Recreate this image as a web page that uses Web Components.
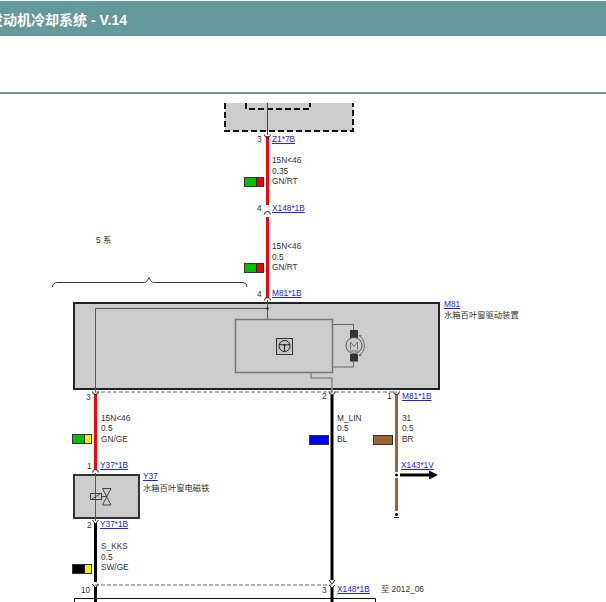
<!DOCTYPE html>
<html lang="zh">
<head>
<meta charset="utf-8">
<title>发动机冷却系统</title>
<style>
html, body { margin: 0; height: 100%; overflow: hidden; background: #fff; }
body { font-family: "Liberation Sans", "Noto Sans CJK SC", sans-serif; }
</style>
</head>
<body>
<page-header title-text="发动机冷却系统 - V.14"></page-header>
<wiring-canvas>
  <wiring-drawing></wiring-drawing>

  <wire-text x="257" y="139">3</wire-text>
  <wire-link x="272" y="139">Z1*7B</wire-link>
  <wire-notes x="272" y="160" a="15N&lt;46" b="0.35" c="GN/RT"></wire-notes>
  <wire-swatch x="244" y="177" main="#00c000" stripe="#f00000"></wire-swatch>
  <wire-text x="257" y="208">4</wire-text>
  <wire-link x="272" y="208">X148*1B</wire-link>
  <wire-text x="96" y="240">5 系</wire-text>
  <wire-notes x="272" y="246" a="15N&lt;46" b="0.5" c="GN/RT"></wire-notes>
  <wire-swatch x="244" y="263" main="#00c000" stripe="#f00000"></wire-swatch>
  <wire-text x="257" y="294">4</wire-text>
  <wire-link x="272" y="293">M81*1B</wire-link>
  <wire-link x="444" y="304">M81</wire-link>
  <wire-text x="444" y="315">水箱百叶窗驱动装置</wire-text>

  <wire-text x="86" y="397">3</wire-text>
  <wire-text x="322" y="396">2</wire-text>
  <wire-text x="387" y="396">1</wire-text>
  <wire-link x="402" y="396">M81*1B</wire-link>
  <wire-notes x="101" y="417.5" a="15N&lt;46" b="0.5" c="GN/GE"></wire-notes>
  <wire-swatch x="72" y="434" main="#00c000" stripe="#f0f000"></wire-swatch>
  <wire-notes x="337" y="417.5" a="M_LIN" b="0.5" c="BL"></wire-notes>
  <wire-swatch x="309" y="435" main="#0000f0"></wire-swatch>
  <wire-notes x="402" y="417.5" a="31" b="0.5" c="BR"></wire-notes>
  <wire-swatch x="373" y="435" main="#996633"></wire-swatch>
  <wire-link x="401" y="465">X143*1V</wire-link>
  <wire-text x="87" y="466">1</wire-text>
  <wire-link x="100" y="465">Y37*1B</wire-link>
  <wire-link x="143" y="476">Y37</wire-link>
  <wire-text x="143" y="488">水箱百叶窗电磁铁</wire-text>

  <wire-text x="87" y="525">2</wire-text>
  <wire-link x="100" y="524">Y37*1B</wire-link>
  <wire-notes x="101" y="546" a="S_KKS" b="0.5" c="SW/GE"></wire-notes>
  <wire-swatch x="72" y="564" main="#000" stripe="#f0f000"></wire-swatch>
  <wire-text x="81" y="590">10</wire-text>
  <wire-text x="322" y="590">3</wire-text>
  <wire-link x="337" y="589">X148*1B</wire-link>
  <wire-text x="381" y="589">至 2012_06</wire-text>
</wiring-canvas>

<script>
// page y of the top of the canvas, coordinates below are read off the page
const CANVAS_TOP = 94

function place(el) {
    el.style.left = el.getAttribute('x') + 'px'
    el.style.top = (parseFloat(el.getAttribute('y')) - CANVAS_TOP - 5) + 'px'
}

class PageHeader extends HTMLElement {
    constructor() {
        super()
        this.attachShadow({mode: 'open'})
    }
    connectedCallback() {
        this.shadowRoot.innerHTML = `
        <style>
        :host { display: block; height: 94px; box-sizing: border-box; border-bottom: 2px solid #669999; padding-top: 1px; }
        .bar { height: 35px; background: #669999; color: #fff; display: flex; align-items: center; overflow: hidden; }
        h1 { margin: 0 0 0 -11px; font: bold 14px "Liberation Sans", "Noto Sans CJK SC", sans-serif; white-space: nowrap; }
        </style>
        <div class="bar"><h1>${this.getAttribute('title-text')}</h1></div>
        `
    }
}

class WiringCanvas extends HTMLElement {
    constructor() {
        super()
        this.attachShadow({mode: 'open'})
        this.shadowRoot.innerHTML = `
        <style>
        :host { display: block; position: relative; height: 508px; overflow: hidden; }
        </style>
        <slot></slot>
        `
    }
}

class WiringDrawing extends HTMLElement {
    constructor() {
        super()
        this.attachShadow({mode: 'open'})
        this.shadowRoot.innerHTML = `
        <style>
        :host { display: block; position: absolute; left: 0; top: 0; }
        svg { display: block; }
        </style>
        <svg width="606" height="508" viewBox="0 94 606 508" fill="none">
          <!-- upper control unit, cut off -->
          <rect x="225" y="103" width="128" height="28" fill="#ccc"/>
          <path d="M225 103V131H353V103" stroke="#111" stroke-width="2" stroke-dasharray="6 3"/>
          <path d="M246 103V109H310V103" stroke="#111" stroke-width="2" stroke-dasharray="6 3"/>
          <path d="M267.5 103V135" stroke="#444"/>

          <!-- red wires top -->
          <path d="M267.5 136V205M267.5 217V298" stroke="#f00" stroke-width="3"/>
          <path d="M264.5 134.5a3 3 0 0 0 6 0M264.5 214.5a3 3 0 0 1 6 0M264.5 300.5a3 3 0 0 1 6 0" stroke="#222"/>

          <!-- brace -->
          <path d="M52.5 287c0-3 2-4.500 5-4.500H144c2 0 3-1 5-5 2 4 3 5 5 5h88c3 0 5 1.500 5 4.500" stroke="#333"/>

          <!-- M81 -->
          <rect x="74" y="303" width="365" height="86" fill="#ccc" stroke="#222" stroke-width="2"/>
          <path d="M95.500 392V308.500H267.500M267.500 300V319" stroke="#555"/>
          <circle cx="267.500" cy="308.500" r="1.300" fill="#333"/>
          <rect x="235.500" y="319.500" width="97" height="53" stroke="#777" stroke-width="1.500"/>
          <path d="M311 372.500V378H332V392" stroke="#888" stroke-width="1.500"/>
          <rect x="276.500" y="338.500" width="16" height="16" fill="#c4c4c4" stroke="#333"/>
          <circle cx="284.500" cy="346" r="5.500" stroke="#222"/>
          <path d="M279 344.500c2 0 3.500 .5 5.500 .5s3.500-.5 5.500-.5M284.500 345V351.500" stroke="#222"/>
          <circle cx="284.500" cy="345" r="1" fill="#222"/>
          <path d="M332.500 324.500H353.500V330M332.500 367H353.500V361" stroke="#666"/>
          <rect x="350" y="330" width="8" height="8" fill="#333"/>
          <rect x="350" y="354" width="8" height="7.500" fill="#333"/>
          <circle cx="354" cy="345.500" r="8" fill="#ccc" stroke="#555"/>
          <path d="M350.500 349.500V342L354 346.500 357.500 342V349.500M350 351H358" stroke="#555" stroke-width=".8"/>
          <path d="M359 335.500a12 12 0 0 1 0 20M359 355.500l2.500-.3M359 335.500l2.500.3" stroke="#555" stroke-width=".8"/>

          <!-- dashed plug lines -->
          <path d="M95 392H397" stroke="#666" stroke-dasharray="4 2"/>
          <path d="M95 585H332" stroke="#666" stroke-dasharray="4 2"/>

          <!-- lower wires -->
          <path d="M95.500 394V470" stroke="#f00" stroke-width="3"/>
          <path d="M95.500 523V582M95.500 587V602M332 395V580M332 587V602" stroke="#000" stroke-width="3"/>
          <path d="M396.500 394V472M396.500 478V511" stroke="#996633" stroke-width="3"/>
          <path d="M92.500 391.500a3 3 0 0 0 6 0M329 391.500a3 3 0 0 0 6 0M393.500 391.500a3 3 0 0 0 6 0M92.500 472.500a3 3 0 0 1 6 0" stroke="#222"/>
          <path d="M92.500 520l3 4 3-4M92.500 584l3 4 3-4M329 580l3 4 3-4M329 585l3 3 3-3" stroke="#222"/>

          <!-- branch arrow and ground -->
          <circle cx="396.500" cy="475" r="1.500" fill="#000"/>
          <path d="M400 475H430" stroke="#000" stroke-width="3"/>
          <path d="M429 470.500L438 475 429 479.500Z" fill="#000"/>
          <circle cx="396.500" cy="514.500" r="1.500" fill="#000"/>
          <path d="M394 517.500H399" stroke="#000"/>

          <!-- Y37 -->
          <rect x="74" y="475" width="65" height="43" fill="#ccc" stroke="#333" stroke-width="2"/>
          <path d="M95.500 473V521" stroke="#555"/>
          <rect x="90.500" y="493.500" width="11" height="6" stroke="#444"/>
          <path d="M92 499L100 494M101.500 496.500H106.500" stroke="#444"/>
          <path d="M102.500 488.500H111L102.500 505H111Z" stroke="#444"/>

          <!-- next unit -->
          <path d="M74.500 602V598.500H375.500V602" stroke="#111"/>
        </svg>
        `
    }
}

class WireText extends HTMLElement {
    constructor() {
        super()
        this.attachShadow({mode: 'open'})
        this.shadowRoot.innerHTML = `
        <style>
        :host { display: block; position: absolute; font: 8.3px/10px "Liberation Sans", "Noto Sans CJK SC", sans-serif; color: #333; white-space: nowrap; }
        </style>
        <slot></slot>
        `
    }
    connectedCallback() { place(this) }
}

class WireLink extends HTMLElement {
    constructor() {
        super()
        this.attachShadow({mode: 'open'})
        this.shadowRoot.innerHTML = `
        <style>
        :host { display: block; position: absolute; font: 8.3px/10px "Liberation Sans", sans-serif; white-space: nowrap; }
        a { color: #2222ee; text-decoration: underline; }
        </style>
        <a href="#"><slot></slot></a>
        `
    }
    connectedCallback() { place(this) }
}

class WireNotes extends HTMLElement {
    constructor() {
        super()
        this.attachShadow({mode: 'open'})
    }
    connectedCallback() {
        place(this)
        this.shadowRoot.innerHTML = `
        <style>
        :host { display: flex; flex-direction: column; gap: .6px; position: absolute; font: 8.3px/10px "Liberation Sans", sans-serif; color: #333; white-space: nowrap; }
        </style>
        <span></span><span></span><span></span>
        `
        const spans = this.shadowRoot.querySelectorAll('span')
        spans[0].textContent = this.getAttribute('a')
        spans[1].textContent = this.getAttribute('b')
        spans[2].textContent = this.getAttribute('c')
    }
}

class WireSwatch extends HTMLElement {
    constructor() {
        super()
        this.attachShadow({mode: 'open'})
    }
    connectedCallback() {
        this.style.left = this.getAttribute('x') + 'px'
        this.style.top = (parseFloat(this.getAttribute('y')) - CANVAS_TOP) + 'px'
        const stripe = this.getAttribute('stripe')
        this.shadowRoot.innerHTML = `
        <style>
        :host { display: flex; position: absolute; box-sizing: border-box; width: 20px; height: 10px; border: 1px solid #333; background: ${this.getAttribute('main')}; }
        .main { flex: 1; }
        .stripe { width: 6px; border-left: 1px solid #222; background: ${stripe}; }
        </style>
        <div class="main"></div>
        ${stripe ? '<div class="stripe"></div>' : ''}
        `
    }
}

customElements.define('page-header', PageHeader)
customElements.define('wiring-canvas', WiringCanvas)
customElements.define('wiring-drawing', WiringDrawing)
customElements.define('wire-text', WireText)
customElements.define('wire-link', WireLink)
customElements.define('wire-notes', WireNotes)
customElements.define('wire-swatch', WireSwatch)
</script>
</body>
</html>
